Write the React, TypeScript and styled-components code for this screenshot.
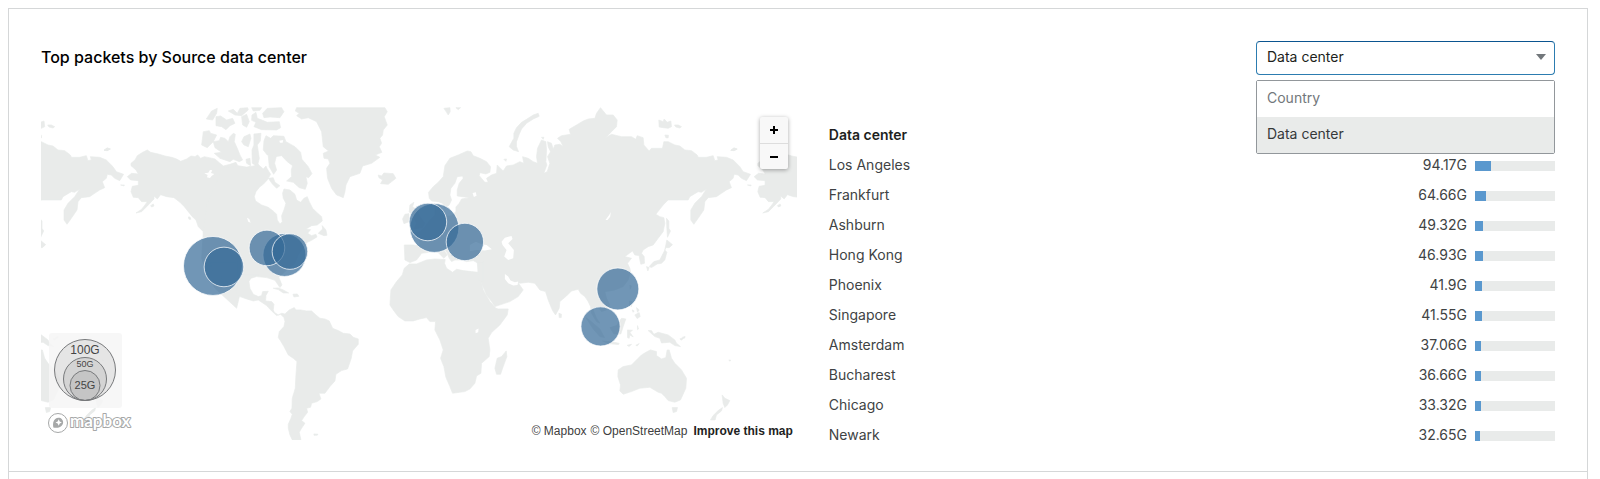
import React, { useState } from "react";
import styled, { createGlobalStyle } from "styled-components";

const GlobalStyle = createGlobalStyle`
  *, *::before, *::after { box-sizing: border-box; }
  body {
    margin: 0;
    background: #ffffff;
    color: #404344;
    font-family: Inter, "Open Sans", sans-serif;
    font-size: 14px;
    line-height: 20px;
  }
`;

const Page = styled.main`
  margin: 0 12px 0 8px;
  border: solid #d5d7d8;
  border-width: 0 1px;
`;

const Panel = styled.section`
  padding: 32px 32px 21px;
  border: solid #d5d7d8;
  border-width: 1px 0;
  margin-top: 8px;
`;

const NextPanel = styled.div`
  height: 8px;
`;

const Header = styled.header`
  display: flex;
  align-items: flex-start;
  justify-content: space-between;
  margin-bottom: 32px;
`;

const Title = styled.h2`
  margin: 0;
  font-size: 16px;
  font-weight: 500;
  line-height: 32px;
  color: #000000;
`;

const Picker = styled.div`
  position: relative;
  width: 299px;
`;

const Select = styled.select`
  display: block;
  width: 100%;
  height: 34px;
  padding: 0 32px 2px 10px;
  appearance: none;
  border: 1px solid #2c7cb0;
  border-top-color: #0b5590;
  border-radius: 4px;
  background: #ffffff;
  color: #1d1f20;
  font: inherit;
`;

const Caret = styled.svg`
  position: absolute;
  top: 13px;
  right: 9px;
  pointer-events: none;
`;

const Menu = styled.ul`
  position: absolute;
  z-index: 2;
  top: 100%;
  left: 0;
  right: 0;
  margin: 5px 0 0;
  padding: 0;
  list-style: none;
  background: #ffffff;
  border: 1px solid #92979b;
  border-radius: 2px;
`;

const Option = styled.button<{ $active: boolean }>`
  display: block;
  width: 100%;
  height: 36px;
  padding: 0 10px 2px;
  border: 0;
  text-align: left;
  font: inherit;
  background: ${(p) => (p.$active ? "#e9ebea" : "#ffffff")};
  color: ${(p) => (p.$active ? "#36393a" : "#72777b")};
`;

const Columns = styled.div`
  display: grid;
  grid-template-columns: 51fr 49fr;
  gap: 32px;
  align-items: start;
`;

const MapFrame = styled.div`
  position: relative;
  font-family: "Liberation Sans", Arial, sans-serif;
`;

const MapCanvas = styled.svg`
  display: block;
  width: 100%;
  height: auto;
`;

const ZoomControls = styled.div`
  position: absolute;
  top: 10px;
  right: 9px;
  width: 28px;
  border-radius: 2px;
  background: #f8f8f8;
  box-shadow: 0 1px 4px rgba(0, 0, 0, 0.35);
`;

const ZoomButton = styled.button`
  display: flex;
  align-items: center;
  justify-content: center;
  width: 100%;
  height: 26px;
  padding: 0;
  border: 0;
  background: transparent;

  & + & {
    border-top: 1px solid #dddddd;
  }
`;

const Legend = styled.svg`
  position: absolute;
  left: 8px;
  bottom: 32px;
  border-radius: 3px;
  background: rgba(246, 246, 246, 0.85);
`;

const LogoLink = styled.a`
  position: absolute;
  left: 6px;
  bottom: 4px;
  display: block;
  height: 28px;
`;

const Attribution = styled.div`
  position: absolute;
  right: 4px;
  bottom: 0;
  display: flex;
  gap: 6px;
  font-size: 12px;
  line-height: 18px;
`;

const CreditLink = styled.a<{ $strong?: boolean }>`
  color: ${(p) => (p.$strong ? "#222222" : "#404040")};
  font-weight: ${(p) => (p.$strong ? 700 : 400)};
  text-decoration: none;
`;

const Credits = styled.span`
  display: flex;
  gap: 4px;
`;

const Table = styled.table`
  width: 100%;
  margin-top: 13px;
  border-collapse: collapse;
`;

const Head = styled.th`
  height: 30px;
  padding: 0;
  text-align: left;
  font-weight: 600;
  color: #1d1f20;
`;

const Name = styled.td`
  height: 30px;
  padding: 0;
`;

const Value = styled.td`
  padding: 0 8px 0 0;
  text-align: right;
`;

const BarCell = styled.td`
  width: 80px;
  padding: 2px 0 0;
`;

const Track = styled.div`
  height: 10px;
  background: #e9ebea;
`;

const Fill = styled.div`
  height: 100%;
  background: #5a98ce;
`;

const rows: [string, number][] = [
  ["Los Angeles", 94.17],
  ["Frankfurt", 64.66],
  ["Ashburn", 49.32],
  ["Hong Kong", 46.93],
  ["Phoenix", 41.9],
  ["Singapore", 41.55],
  ["Amsterdam", 37.06],
  ["Bucharest", 36.66],
  ["Chicago", 33.32],
  ["Newark", 32.65],
];
const total = rows.reduce((sum, [, v]) => sum + v, 0);

/* cx, cy, r in map units */
const bubbles = [
  [172, 159, 29.5],
  [393.5, 121, 24.5],
  [243.5, 148, 21.5],
  [577, 182, 21],
  [183, 160, 19.8],
  [559.7, 219.5, 19.6],
  [387, 115, 18.8],
  [424, 135, 18.7],
  [226, 141, 17.8],
  [249, 144.6, 17.8],
];

/* Land masses by region, each drawn from its own origin */
const regions: { at: [number, number]; land: string[]; water?: string[] }[] = [
  {
    at: [-33, -36],
    land: [
      // Alaska and the Yukon
      "303,205 315,195 322,182 338,172 352,165 362,172 385,177 405,183 425,187 440,192 452,199 470,192 483,183 495,185 503,180 512,190 523,185 538,188 555,192 568,203 580,213 600,208 618,202 625,215 650,217 660,215 660,420 522,425 520,410 505,395 498,375 487,365 475,350 463,335 450,322 432,308 410,305 392,299 382,312 372,303 372,312 350,335 335,350 318,354 335,343 345,330 352,320 335,320 325,308 310,307 303,290 307,274 325,271 325,257 302,255 292,245 305,235 325,237 318,225 303,212",
      "362,332 370,327 372,333 365,336",
      "475,366 480,366 483,373 477,373",
      "222,166 232,159 241,162 232,167",
      "272,270 283,270 282,273",
    ],
    water: [
      "523,235 535,233 540,225 547,226 543,234 553,237 545,243 540,249 531,247 533,240",
      "558,296 568,284 580,291 570,298 563,300",
    ],
  },
  {
    at: [417, -36],
    land: [
      // Canada and the United States
      "130,215 150,218 175,212 200,217 225,212 230,203 240,213 250,222 258,213 262,222 272,238 262,255 250,268 240,275 228,290 223,305 227,318 245,330 265,337 282,350 290,358 292,375 300,387 307,380 305,362 312,345 318,325 310,310 308,295 312,282 330,285 345,298 350,315 362,322 372,310 382,305 388,320 398,340 410,352 425,365 427,378 412,390 395,392 378,402 392,404 383,415 395,422 408,418 411,426 395,436 382,442 372,455 355,480 345,505 315,530 297,548 306,570 300,578 285,556 260,548 230,545 190,556 170,640 105,580 82,540 65,490 68,440 70,410 80,330",
      "428,402 427,392 438,405 441,421 432,422 415,415",
      // Baffin
      "252,138 258,122 272,130 280,122 312,124 318,140 345,155 362,172 366,193 385,215 396,236 386,248 378,245 382,265 376,283 358,278 340,262 320,258 335,245 334,225 338,212 322,200 305,182 285,185 262,180 250,165",
      "265,182 290,180 284,205 290,225 281,238 268,215",
      "318,180 333,175 332,205 325,195",
      "265,250 280,248 285,262 300,272 290,280 278,268",
      // Victoria and Banks
      "70,110 88,107 92,115 110,120 100,140 90,150 82,158 65,150",
      "100,140 118,137 122,127 135,130 145,140 150,125 160,115 166,118 163,140 172,160 180,180 188,195 178,200 160,193 150,200 120,190 103,175 125,172 105,158",
      "192,125 210,117 213,130 205,155 192,150 185,140",
      "222,117 243,115 241,138 232,150 238,190 232,215 217,205 216,165 222,150",
      "198,193 210,190 212,212 200,205",
      // Queen Elizabeth islands
      "79,72 95,48 112,40 110,55 98,75",
      "108,65 122,63 140,75 158,70 165,85 150,92 138,104 125,95 108,92",
      "145,48 160,43 172,55 180,40 203,38 205,45 185,62 165,60",
      "185,65 200,58 208,80 200,97 188,90",
      "216,60 228,52 232,70 248,76 262,82 298,80 302,98 290,105 245,104 222,95 228,82 215,76",
      "248,55 262,40 305,38 312,50 300,68 270,66 252,68",
      "215,38 245,38 240,46 220,48",
      // Greenland
      "350,38 615,38 622,50 613,65 622,90 610,105 608,120 600,130 605,145 598,155 606,172 586,180 600,187 575,205 548,213 540,235 510,245 498,270 495,290 490,308 478,303 470,300 455,280 443,250 440,220 450,205 445,192 432,190 430,175 446,168 430,155 425,110 410,80 385,68 365,72 350,62 358,55 346,48",
      "595,240 605,243 612,234 640,236 648,250 625,268 602,266 608,255 597,248",
    ],
    water: ["201,368 208,372 212,383 205,380", "296,212 308,208 316,222 330,220 325,240 305,245", "298,137 310,135 308,143 300,143"],
  },
  {
    at: [507, 444],
    land: [
      // Mexico, Central and South America
      "60,60 78,100 80,117 90,125 110,132 130,138 145,135 170,152 185,168 200,182 212,178 222,188 225,200 222,215 208,230 205,248 212,258 222,275 235,300 250,310 261,320 258,360 256,400 247,430 246,460 240,470 247,478 243,490 235,508 235,520 240,540 247,555 273,555 268,532 275,520 285,505 275,497 283,485 293,472 290,460 302,457 305,445 322,440 333,432 327,415 345,415 360,395 375,378 378,358 395,347 413,342 424,310 428,288 445,268 445,252 430,247 420,237 400,235 385,227 368,220 358,198 345,192 330,190 318,180 305,168 290,168 272,165 258,165 253,158 238,165 225,177 215,175 205,180 193,172 190,165 192,148 185,140 167,138 168,122 175,109 158,110 155,122 145,125 130,118 120,100 117,80 125,66 145,60",
      "0,20 80,20 80,100 60,90 40,70 30,60 45,92 30,75 8,50",
      "190,100 205,99 220,105 236,114 220,114 205,104",
      "249,118 262,117 267,124 252,126",
      "312,537 324,538 322,541 312,541",
    ],
  },
  {
    at: [987, -36],
    land: [
      // Eurasia
      "103,450 130,450 150,453 150,440 140,425 130,415 150,410 165,395 180,375 195,360 195,335 205,325 212,335 210,355 225,365 245,362 258,350 258,336 268,325 275,312 300,308 262,303 262,285 268,265 280,250 278,243 262,245 255,265 243,280 240,300 245,315 238,330 225,340 218,325 205,320 185,318 178,310 176,292 190,275 205,262 220,245 225,212 240,190 265,180 292,168 303,170 310,182 330,190 350,200 362,215 360,232 348,237 330,233 328,242 345,262 355,262 350,250 365,240 380,235 382,210 390,218 400,228 410,213 430,210 450,200 462,205 458,185 475,190 490,200 503,205 500,185 503,160 515,135 528,140 530,165 528,200 531,210 522,235 532,230 540,205 533,185 542,170 535,155 533,140 545,145 550,163 555,150 570,148 580,155 573,140 563,130 575,122 602,118 598,103 620,90 640,78 655,72 675,70 680,55 692,38 700,48 710,60 730,60 742,75 740,95 725,110 708,128 725,118 755,125 785,125 798,133 802,122 820,128 822,150 838,168 845,160 878,160 882,140 895,140 915,150 930,153 945,165 965,167 982,180 985,187 1010,187 1030,182 1035,197 1045,195 1042,185 1070,187 1090,195 1110,215 1120,230 1142,238 1130,257 1115,250 1105,240 1093,238 1090,250 1078,260 1085,278 1070,285 1055,295 1040,305 1015,308 1005,320 1002,345 985,370 972,388 963,375 963,345 975,325 995,305 1010,282 995,292 985,290 960,305 955,315 895,315 880,330 858,358 870,365 882,368 885,385 880,410 865,430 850,450 835,455 820,465 815,475 823,485 824,505 813,508 810,495 808,482 795,480 788,468 765,485 785,490 773,505 780,520 782,530 775,555 760,575 735,585 720,588 705,590 710,610 720,630 710,645 695,650 688,640 675,638 670,645 680,670 690,685 680,680 665,655 662,635 655,620 645,605 632,595 625,583 605,588 590,603 570,620 568,640 557,660 548,647 535,615 527,590 510,585 495,565 475,562 450,565 443,561 448,568 460,585 445,605 420,620 375,635 365,620 350,600 330,553 333,520 337,500 325,505 310,497 290,500 275,495 255,495 245,500 238,490 232,475 220,455 222,465 232,480 222,490 205,473 195,467 170,473 155,475 148,485 140,495 120,503 105,495",
      // Africa
      "325,532 333,553 340,585 360,620 378,640 385,642 415,642 412,660 390,690 365,713 355,730 360,765 358,785 335,805 333,835 320,843 315,865 300,882 285,890 248,895 240,875 228,847 222,815 212,790 220,765 210,735 195,705 197,680 180,680 170,668 150,672 130,678 105,678 85,665 70,645 60,630 63,585 80,560 97,540 103,520 118,507 140,507 170,495 195,492 226,494 224,505 230,520 248,532 260,523 280,527 305,530",
      "322,500 340,500 340,560 326,556",
      "409,768 411,785 400,815 392,838 380,838 375,820 382,790 395,785",
      "567,655 575,658 574,668 568,668",
      // Britain, Ireland, Novaya Zemlya, Svalbard
      "120,330 132,322 128,335 142,345 150,365 165,385 158,398 132,402 140,385 130,365 118,350",
      "98,372 105,358 117,356 118,380 102,386",
      "490,60 505,55 508,64 490,72 470,85 455,102 448,118 440,140 440,155 446,170 430,165 418,155 425,142 432,130 432,115 440,98 455,82 470,73",
      "222,40 240,38 241,50 235,60 230,52",
      "258,38 272,38 265,44",
      "402,193 410,192 408,199",
      "515,127 522,127 520,133",
      // Siberian islands, Sakhalin, Japan
      "867,75 880,80 883,72 892,82 903,78 905,95 895,100 880,98 868,96",
      "914,90 925,90 935,95 930,99 918,96",
      "885,120 896,121 895,129 888,128",
      "1083,166 1092,159 1102,162 1092,167",
      "890,370 897,378 897,400 902,408 893,427 891,400",
      "891,435 908,449 898,458 888,458 885,465",
      "885,465 891,472 885,495 875,505 862,507 845,518 838,515 852,500 870,495",
      "830,515 838,518 834,528",
    ],
    water: [
      "395,440 405,428 425,423 428,432 415,445 432,465 430,490 415,495 403,485 410,465 398,450",
      "300,450 318,440 335,448 350,450 366,463 345,467 320,465 300,468",
      "405,537 415,545 422,557 435,562 445,560 443,570 430,572 415,565 405,552",
      "707,375 718,360 723,351 721,365 713,375",
      "308,294 318,292 320,302 312,306",
      "317,705 326,701 325,712 317,715",
    ],
  },
  {
    at: [1557, 444],
    land: [
      // Oceania
      "175,345 190,335 215,330 235,310 245,300 262,290 272,285 290,290 290,302 305,312 318,308 322,285 328,285 335,310 345,325 365,345 380,370 378,400 362,435 345,442 325,437 315,425 305,415 295,412 270,397 240,400 215,410 190,418 180,408 182,390 174,365",
      "265,227 275,227 282,238 295,232 325,240 345,255 350,265 362,275 345,272 330,262 305,264 300,250 285,245",
      "337,458 353,458 350,470 340,473",
      "487,420 495,430 510,437 503,450 495,458 490,445",
      "488,458 485,468 470,480 466,495 452,495 460,482 475,467",
      "185,190 198,192 190,215 183,237 162,237 150,218 170,212",
      "78,188 92,198 120,222 134,248 120,245 100,222",
      "128,258 150,260 178,265 176,269 145,266",
      "203,225 218,226 210,232 220,246 210,240 208,250 203,248",
      "209,138 217,140 215,155 208,150",
      "225,180 238,173 241,185 232,191",
      "230,158 238,165 233,172",
      "217,165 223,168 220,172",
      "210,90 215,93 211,103",
      "202,271 215,268 208,275",
      "228,271 238,266 232,273",
      "233,212 236,222 233,224",
      "360,252 375,246 365,256",
      "368,247 376,245 374,250",
      "507,315 513,316 510,319",
    ],
  },
];

/* Distance between repeats of the world */
const WORLD = 1881;

const World = ({ shift }: { shift: number }) => (
  <g transform={`translate(${shift} 0)`}>
    {regions.map(({ at, land, water = [] }, i) => (
      <g key={i} transform={`translate(${at[0]} ${at[1]})`}>
        {land.map((points) => (
          <polygon key={points} points={points} fill="#e9ebea" stroke="#e9ebea" strokeWidth="2" strokeLinejoin="round" />
        ))}
        {water.map((points) => (
          <polygon key={points} points={points} fill="#ffffff" />
        ))}
      </g>
    ))}
  </g>
);

const TrafficMap = () => (
  <MapFrame>
    <MapCanvas viewBox="0 0 756 333" role="img" aria-label="Map of packets by data center">
      <g transform="scale(0.33333)">
        <World shift={-WORLD} />
        <World shift={0} />
        <World shift={WORLD} />
      </g>
      {bubbles.map(([cx, cy, r]) => (
        <circle key={cx} cx={cx} cy={cy} r={r} fill="#346a97" fillOpacity="0.7" stroke="#ffffff" strokeOpacity="0.75" strokeWidth="1" />
      ))}
    </MapCanvas>
    <ZoomControls>
      <ZoomButton type="button" aria-label="Zoom in">
        <svg width="10" height="10" viewBox="0 0 10 10" stroke="#000000" strokeWidth="2">
          <path d="M1 5h8M5 1v8" />
        </svg>
      </ZoomButton>
      <ZoomButton type="button" aria-label="Zoom out">
        <svg width="10" height="10" viewBox="0 0 10 10" stroke="#000000" strokeWidth="2">
          <path d="M1 5h8" />
        </svg>
      </ZoomButton>
    </ZoomControls>
    <Legend width="73" height="75" viewBox="0 0 73 75" textAnchor="middle" fill="#444444">
      <g fill="#000000" fillOpacity="0.07" stroke="#77797b" strokeWidth="1">
        <circle cx="36" cy="37" r="30.5" />
        <circle cx="36" cy="46" r="21.5" />
        <circle cx="36" cy="52.5" r="15" />
      </g>
      <text x="36" y="21" fontSize="12">100G</text>
      <text x="36" y="34" fontSize="9">50G</text>
      <text x="36" y="56" fontSize="11">25G</text>
    </Legend>
    <LogoLink href="#mapbox" aria-label="Mapbox">
      <svg width="96" height="28" viewBox="0 -4 96 28">
        <circle cx="11" cy="11" r="9.5" fill="#ffffff" stroke="#a6a8a8" strokeWidth="1" />
        <path
          d="M6.300 15.600C5.600 11.500 6.300 8.700 8.200 7.100C10.300 5.300 13.200 5.500 14.900 7.200C16.600 8.900 16.600 11.700 14.900 13.500C13.200 15.500 10.400 16.300 6.300 15.600Z"
          fill="#a6a8a8"
        />
        <path d="M11.700 7.300l1 2.200 2.200 1-2.200 1-1 2.200-1-2.200-2.200-1 2.200-1z" fill="#ffffff" />
        <text
          x="23"
          y="15"
          fontFamily="Lato, sans-serif"
          fontWeight="700"
          fontSize="17"
          fill="#ffffff"
          stroke="#a6a8a8"
          strokeWidth="2"
          strokeLinejoin="round"
          paintOrder="stroke"
        >
          mapbox
        </text>
      </svg>
    </LogoLink>
    <Attribution>
      <Credits>
        <CreditLink href="#mapbox">© Mapbox</CreditLink>
        <CreditLink href="#osm">© OpenStreetMap</CreditLink>
      </Credits>
      <CreditLink href="#improve" $strong>
        Improve this map
      </CreditLink>
    </Attribution>
  </MapFrame>
);

const groupings = ["Country", "Data center"];

export default function App() {
  const [grouping, setGrouping] = useState("Data center");

  return (
    <>
      <GlobalStyle />
      <Page>
        <Panel>
          <Header>
            <Title>Top packets by Source data center</Title>
            <Picker>
              <Select aria-label="Group by" value={grouping} onChange={(e) => setGrouping(e.target.value)}>
                {groupings.map((name) => (
                  <option key={name}>{name}</option>
                ))}
              </Select>
              <Caret width="10" height="6" viewBox="0 0 10 6">
                <path d="M0 0h10L5 6z" fill="#72777b" />
              </Caret>
              <Menu>
                {groupings.map((name) => (
                  <li key={name}>
                    <Option type="button" $active={name === grouping} onClick={() => setGrouping(name)}>
                      {name}
                    </Option>
                  </li>
                ))}
              </Menu>
            </Picker>
          </Header>
          <Columns>
            <TrafficMap />
            <Table>
              <thead>
                <tr>
                  <Head colSpan={3}>Data center</Head>
                </tr>
              </thead>
              <tbody>
                {rows.map(([name, value]) => (
                  <tr key={name}>
                    <Name>{name}</Name>
                    <Value>{value}G</Value>
                    <BarCell>
                      <Track>
                        <Fill style={{ width: `${(value / total) * 100}%` }} />
                      </Track>
                    </BarCell>
                  </tr>
                ))}
              </tbody>
            </Table>
          </Columns>
        </Panel>
        <NextPanel />
      </Page>
    </>
  );
}
